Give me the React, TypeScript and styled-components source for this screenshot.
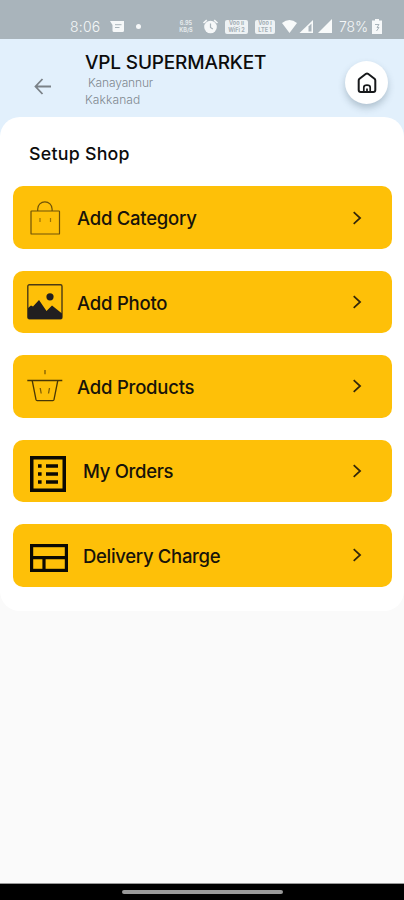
import React from 'react';
import styled, { createGlobalStyle } from 'styled-components';

const GlobalStyle = createGlobalStyle`
  * { box-sizing: border-box; }
  body { margin: 0; background: #fafafa; }
`;

const Screen = styled.div`
  display: flex;
  flex-direction: column;
  width: 404px;
  height: 900px;
  overflow: hidden;
  background: #fafafa;
  color: #0c0c0c;
  font-family: Inter, "Liberation Sans", sans-serif;
  svg { display: block; flex: none; overflow: visible; }
`;

const StatusBar = styled.div`
  display: flex;
  align-items: center;
  height: 39px;
  flex: none;
  padding: 14px 21px 0 70px;
  background: #a9b4bb;
  color: #f4f7f8;
`;

const StatusText = styled.span<{ $w: number; $spacing?: string }>`
  width: ${p => p.$w}px;
  font-size: 14px;
  line-height: 16px;
  font-weight: 300;
  white-space: nowrap;
  letter-spacing: ${p => p.$spacing ?? '0'};
`;

const Gap = styled.span<{ $w: number }>`
  flex: none;
  width: ${p => p.$w}px;
`;

const Dot = styled.span`
  width: 5px;
  height: 5px;
  border-radius: 50%;
  background: #f6f8f9;
`;

const TinyStack = styled.span<{ $w: number; $solid?: boolean }>`
  display: flex;
  flex-direction: column;
  align-items: center;
  justify-content: center;
  flex: none;
  width: ${p => p.$w}px;
  height: 14px;
  border-radius: 2px;
  font-size: 5.5px;
  font-weight: 700;
  line-height: 7px;
  white-space: nowrap;
  background: ${p => (p.$solid ? '#eef2f4' : 'transparent')};
  color: ${p => (p.$solid ? '#a3aeb5' : '#e6ebed')};
`;

const Header = styled.header`
  display: flex;
  flex: none;
  height: 98px;
  padding-left: 34px;
  background: #e2f0fc;
`;

const BackButton = styled.button`
  width: 51px;
  height: 17px;
  margin-top: 39px;
  padding: 0;
  border: 0;
  background: none;
`;

const ShopInfo = styled.div`
  width: 260px;
  padding-top: 12px;
`;

const ShopName = styled.h1`
  margin: 0;
  font-size: 19px;
  line-height: 23px;
  font-weight: 500;
  letter-spacing: -0.17px;
  white-space: nowrap;
`;

const Locality = styled.div<{ $indent?: number; $spacing: number }>`
  padding-left: ${p => p.$indent ?? 0}px;
  font-size: 12px;
  line-height: 17px;
  font-weight: 300;
  color: #7f888f;
  letter-spacing: ${p => p.$spacing}px;
`;

const HomeButton = styled.button`
  display: flex;
  align-items: center;
  justify-content: center;
  width: 43px;
  height: 43px;
  margin-top: 22px;
  padding: 0;
  border: 0;
  border-radius: 50%;
  background: #fff;
  box-shadow: 0 4px 7px rgba(70, 95, 115, 0.32);
`;

const Panel = styled.main`
  flex: none;
  height: 494px;
  margin-top: -20px;
  padding: 26px 12px 0 13px;
  border-radius: 20px;
  background: #fff;
`;

const Heading = styled.h2`
  margin: 0 0 21.4px 16px;
  font-size: 17.8px;
  line-height: 22px;
  font-weight: 500;
  letter-spacing: 0.25px;
`;

const Menu = styled.nav`
  display: flex;
  flex-direction: column;
  gap: 21.8px;
`;

const MenuRow = styled.button`
  display: flex;
  align-items: center;
  width: 379px;
  height: 62.6px;
  padding: 0 29px 0 14px;
  border: 0;
  border-radius: 10px;
  background: #fec008;
  color: #17130a;
  font-family: inherit;
`;

const IconSlot = styled.span<{ $w: number }>`
  display: flex;
  flex: none;
  width: ${p => p.$w}px;
`;

const LargeIcon = styled.span`
  display: flex;
  padding: 6px 0 0 3px;
`;

const RowLabel = styled.span<{ $spacing: number }>`
  flex: 1;
  padding-top: 1px;
  text-align: left;
  font-size: 18.5px;
  line-height: 24px;
  font-weight: 500;
  white-space: nowrap;
  letter-spacing: ${p => p.$spacing}px;
`;

const Spacer = styled.div`
  flex: 1;
  border-bottom: 1px solid #999;
`;

const NavBar = styled.footer`
  display: flex;
  justify-content: center;
  flex: none;
  height: 16px;
  padding-top: 6px;
  background: #000;
`;

const HomeHandle = styled.span`
  width: 161px;
  height: 4px;
  border-radius: 2px;
  background: #999;
`;

const BagIcon = () => (
  <svg width="36" height="36" viewBox="0 0 36 36" fill="none" stroke="#6f5308" strokeWidth="1.2">
    <rect x="4" y="11" width="28.5" height="23" rx=".6" />
    <path d="M10.7 11V9a7.2 7.2 0 0 1 14.4 0v2" />
    <path d="M13 18v4M23.5 18v4" stroke="#9c7406" />
  </svg>
);

const PhotoIcon = () => (
  <svg width="36" height="36" viewBox="0 0 36 36">
    <rect x=".8" y=".8" width="34.2" height="34" rx="1.5" fill="none" stroke="#4a3a14" strokeWidth="1.4" />
    <path d="M1 24 4 21.500 6 22.500 12 16 19.500 27 25 21.500 35 29.500V33.500a1.500 1.500 0 0 1-1.500 1.500H2.500A1.500 1.500 0 0 1 1 33.500Z" fill="#211f20" />
    <circle cx="23" cy="12.800" r="3.600" fill="#211f20" />
  </svg>
);

const BasketIcon = () => (
  <svg width="36" height="36" viewBox="0 0 36 36" fill="none" stroke="#4a3805" strokeWidth="1.300">
    <path d="M.3 12.500h35" />
    <path d="M5.200 12.500 9 31.700q.2.900 1.200.900h15.600q1 0 1.200-.9l3.800-19.200" />
    <path d="M18 2v4.300M13.200 20l1 5.500M22.500 20l-1 5.500" stroke="#7e5e06" />
  </svg>
);

const OrdersIcon = () => (
  <svg width="36" height="36" viewBox="0 0 36 36" fill="#0c0a03">
    <path fillRule="evenodd" d="M0 0H36V36H0ZM3.500 3.500V32.500H32.500V3.500Z" />
    <path d="M8 8.300h3.600v3.400H8ZM16 8.300h12v3.400H16ZM8 16.300h3.600v3.400H8ZM16 16.300h12v3.400H16ZM8 24.300h3.600v3.400H8ZM16 24.300h12v3.400H16Z" />
  </svg>
);

const ChargeIcon = () => (
  <svg width="38" height="28" viewBox="0 0 38 28" fill="none" stroke="#0c0a03" strokeWidth="3.200">
    <rect x="1.600" y="1.600" width="34.800" height="24.800" />
    <path d="M2 13.700H36M14 14V26" />
  </svg>
);

const Chevron = () => (
  <svg width="11" height="14" viewBox="0 0 11 14" fill="none" stroke="#33270a" strokeWidth="1.700">
    <path d="m1.700 1.200 6.400 5.800-6.400 5.800" />
  </svg>
);

type Item = { label: string; icon: React.ReactNode; slot: number; spacing: number };

const items: Item[] = [
  { label: 'Add Category', icon: <BagIcon />, slot: 50, spacing: -0.25 },
  { label: 'Add Photo', icon: <PhotoIcon />, slot: 50, spacing: -0.22 },
  { label: 'Add Products', icon: <BasketIcon />, slot: 50, spacing: -0.22 },
  { label: 'My Orders', icon: <LargeIcon><OrdersIcon /></LargeIcon>, slot: 56, spacing: -0.3 },
  { label: 'Delivery Charge', icon: <LargeIcon><ChargeIcon /></LargeIcon>, slot: 56, spacing: -0.32 },
];

export default function App() {
  return (
    <Screen>
      <GlobalStyle />
      <StatusBar>
        <StatusText $w={31} $spacing="0.2px">8:06</StatusText>
        <Gap $w={9} />
        <svg width="14" height="12" viewBox="0 0 14 12">
          <path d="M0 0h14v9.500q0 1.500-1.500 1.500H4q-1.500 0-1.500-1.500V4Z" fill="#f6f8f9" />
          <path d="M5 3.700h6.500M5 6.500h4.500" stroke="#a9b4bb" strokeWidth="1" />
        </svg>
        <Gap $w={12} />
        <Dot />
        <Gap $w={36} />
        <TinyStack $w={18}><span>6.95</span><span>KB/S</span></TinyStack>
        <Gap $w={8} />
        <svg width="15" height="15" viewBox="0 0 15 15">
          <circle cx="7.500" cy="8" r="6.300" fill="#f6f8f9" />
          <path d="M.5 4 3.800 1.200M14.500 4l-3.300-2.800" stroke="#f6f8f9" strokeWidth="1.600" />
          <path d="M7.500 4.500V8.500L9.800 10" stroke="#a9b4bb" strokeWidth="1.200" fill="none" />
        </svg>
        <Gap $w={7} />
        <TinyStack $w={23} $solid><span>Voo ıı</span><span>WiFi 2</span></TinyStack>
        <Gap $w={7} />
        <TinyStack $w={20} $solid><span>Voo ı</span><span>LTE 1</span></TinyStack>
        <Gap $w={7} />
        <svg width="50" height="15" viewBox="0 0 50 15">
          <path d="M0 4Q7.500-2 15 4L7.500 14Z" fill="#f8fafa" />
          <path d="M17.500 14 31 1V14Z" fill="#f8fafa" />
          <path d="M26.500 7.500 29.500 4.500V12.500H26.500Z" fill="#a9b4bb" />
          <path d="M36 14 50 0V14Z" fill="#f8fafa" />
        </svg>
        <Gap $w={7} />
        <StatusText $w={30} $spacing="-0.1px">78%</StatusText>
        <Gap $w={3} />
        <svg width="10" height="15" viewBox="0 0 10 15">
          <path d="M3 0h4v1.500h3V15H0V1.500h3Z" fill="#f6f8f9" />
          <path d="M3 5.500h4L5 8.500h2L4.500 12" stroke="#a9b4bb" fill="none" />
        </svg>
      </StatusBar>
      <Header>
        <BackButton aria-label="Back">
          <svg width="17" height="17" viewBox="0 0 17 17" fill="none" stroke="#7b8288" strokeWidth="1.800">
            <path d="M17 8.500H1.800M8.500 1 1.500 8.500l7 7.500" />
          </svg>
        </BackButton>
        <ShopInfo>
          <ShopName>VPL SUPERMARKET</ShopName>
          <Locality $indent={3} $spacing={-0.15}>Kanayannur</Locality>
          <Locality $spacing={0.1}>Kakkanad</Locality>
        </ShopInfo>
        <HomeButton aria-label="Home">
          <svg width="20" height="22" viewBox="0 0 20 22" fill="none" stroke="#17191b" strokeWidth="2" strokeLinejoin="round">
            <path d="M1.700 8.500Q1.700 7.500 2.500 6.800L9 1.800Q10 1.200 11 1.800L17.500 6.800Q18.300 7.500 18.300 8.500V18Q18.300 20 16.300 20H3.700Q1.700 20 1.700 18Z" />
            <path d="M6.800 20V15.500Q6.800 13.200 10 13.200T13.200 15.500V20M10 16.500V20" strokeWidth="1.700" />
          </svg>
        </HomeButton>
      </Header>
      <Panel>
        <Heading>Setup Shop</Heading>
        <Menu>
          {items.map(({ label, icon, slot, spacing }) => (
            <MenuRow key={label}>
              <IconSlot $w={slot}>{icon}</IconSlot>
              <RowLabel $spacing={spacing}>{label}</RowLabel>
              <Chevron />
            </MenuRow>
          ))}
        </Menu>
      </Panel>
      <Spacer />
      <NavBar><HomeHandle /></NavBar>
    </Screen>
  );
}
